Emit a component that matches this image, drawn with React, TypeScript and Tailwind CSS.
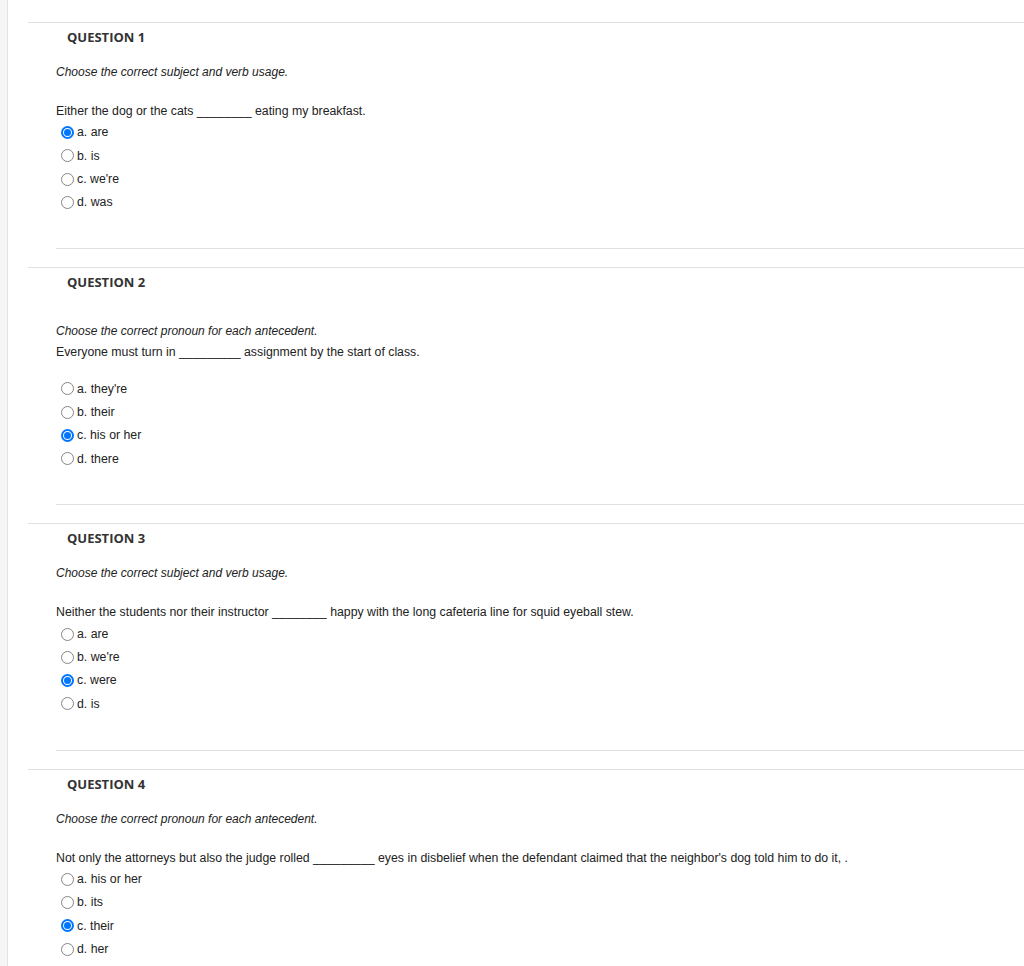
import React from "react";

interface Question {
  number: number;
  instruction: string;
  before: string;
  blank: string;
  after: string;
  options: string[];
  selected: number;
  gaps: { instruction: string; text: string; options: string };
}

const standardGaps = { instruction: "mt-[18px]", text: "mt-[23px]", options: "mt-[2px]" };

const questions: Question[] = [
  {
    number: 1,
    instruction: "Choose the correct subject and verb usage.",
    before: "Either the dog or the cats",
    blank: "________",
    after: "eating my breakfast.",
    options: ["are", "is", "we're", "was"],
    selected: 0,
    gaps: standardGaps,
  },
  {
    number: 2,
    instruction: "Choose the correct pronoun for each antecedent.",
    before: "Everyone must turn in",
    blank: "_________",
    after: "assignment by the start of class.",
    options: ["they're", "their", "his or her", "there"],
    selected: 2,
    gaps: { instruction: "mt-[32px]", text: "mt-[5px]", options: "mt-[17px]" },
  },
  {
    number: 3,
    instruction: "Choose the correct subject and verb usage.",
    before: "Neither the students nor their instructor",
    blank: "________",
    after: "happy with the long cafeteria line for squid eyeball stew.",
    options: ["are", "we're", "were", "is"],
    selected: 2,
    gaps: standardGaps,
  },
  {
    number: 4,
    instruction: "Choose the correct pronoun for each antecedent.",
    before: "Not only the attorneys but also the judge rolled",
    blank: "_________",
    after: "eyes in disbelief when the defendant claimed that the neighbor's dog told him to do it, .",
    options: ["his or her", "its", "their", "her"],
    selected: 2,
    gaps: standardGaps,
  },
];

const letters = ["a", "b", "c", "d"];

function Radio({ checked }: { checked: boolean }) {
  if (checked) {
    return (
      <span className="ml-[5px] mr-[3px] w-[13px] h-[13px] shrink-0 rounded-full border-2 border-[#0075ff] bg-white flex items-center justify-center">
        <span className="w-[7px] h-[7px] rounded-full bg-[#0075ff]" />
      </span>
    );
  }
  return (
    <span className="ml-[5px] mr-[3px] w-[13px] h-[13px] shrink-0 rounded-full border border-[#858585] bg-white" />
  );
}

function QuestionBlock({ q, last }: { q: Question; last: boolean }) {
  return (
    <li className="border-t border-[#e1e1e1]">
      <h3 className="mt-[5px] pl-[39px] text-[13px] leading-[18px] font-bold text-[#333] font-['Open_Sans',sans-serif]">
        QUESTION {q.number}
      </h3>
      <div className="pl-[28px] text-[#222] font-['Liberation_Sans',Arial,sans-serif]">
        <p className={`${q.gaps.instruction} italic text-[12px] leading-4`}>{q.instruction}</p>
        <p className={`${q.gaps.text} text-[12.3px] leading-4 whitespace-nowrap`}>
          {q.before} {q.blank} {q.after}
        </p>
        <ul className={q.gaps.options}>
          {q.options.map((opt, i) => (
            <li key={i} className="flex items-center h-[23.3px] text-[12.3px]">
              <Radio checked={i === q.selected} />
              <span>
                {letters[i]}. {opt}
              </span>
            </li>
          ))}
        </ul>
        {!last && <div className="mt-[34px] mb-[18px] border-t border-[#e1e1e1]" />}
      </div>
    </li>
  );
}

export default function App() {
  return (
    <div className="flex min-h-[966px] bg-white">
      <div className="w-[8px] shrink-0 bg-[#f6f6f6] border-r border-[#e4e4e4]" />
      <ol className="flex-1 pl-[20px] pt-[22px]">
        {questions.map((q, i) => (
          <QuestionBlock key={q.number} q={q} last={i === questions.length - 1} />
        ))}
      </ol>
    </div>
  );
}
